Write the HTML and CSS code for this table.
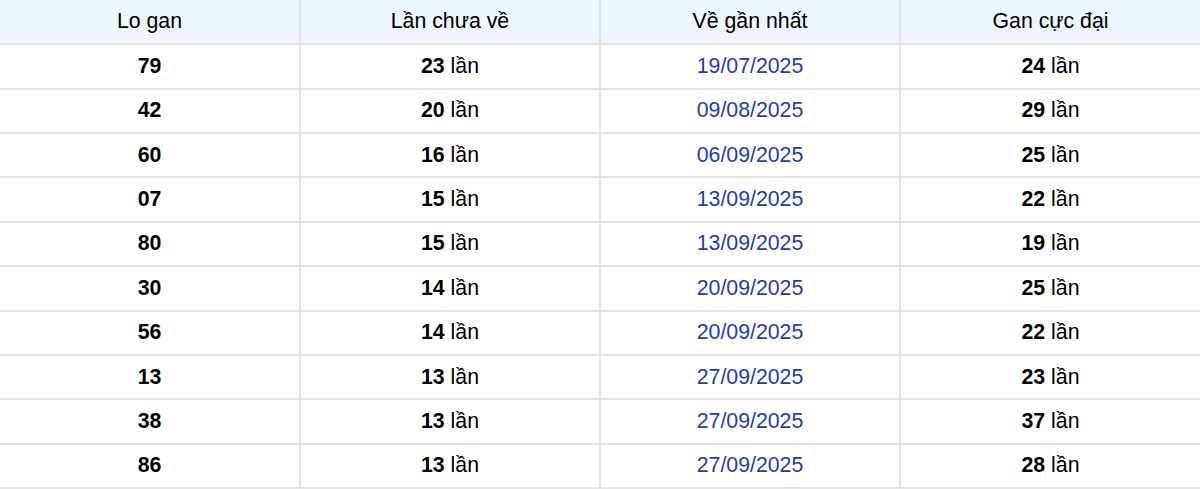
FILE: index.html
```html
<!DOCTYPE html>
<html lang="vi">
<head>
<meta charset="utf-8">
<title>Lo gan</title>
<link rel="stylesheet" href="styles.css">
</head>
<body>
<table class="gan-table">
  <thead>
    <tr><th>Lo gan</th><th>Lần chưa về</th><th>Về gần nhất</th><th>Gan cực đại</th></tr>
  </thead>
  <tbody>
    <tr><td><b>79</b></td><td><b>23</b> lần</td><td class="date">19/07/2025</td><td><b>24</b> lần</td></tr>
    <tr><td><b>42</b></td><td><b>20</b> lần</td><td class="date">09/08/2025</td><td><b>29</b> lần</td></tr>
    <tr><td><b>60</b></td><td><b>16</b> lần</td><td class="date">06/09/2025</td><td><b>25</b> lần</td></tr>
    <tr><td><b>07</b></td><td><b>15</b> lần</td><td class="date">13/09/2025</td><td><b>22</b> lần</td></tr>
    <tr><td><b>80</b></td><td><b>15</b> lần</td><td class="date">13/09/2025</td><td><b>19</b> lần</td></tr>
    <tr><td><b>30</b></td><td><b>14</b> lần</td><td class="date">20/09/2025</td><td><b>25</b> lần</td></tr>
    <tr><td><b>56</b></td><td><b>14</b> lần</td><td class="date">20/09/2025</td><td><b>22</b> lần</td></tr>
    <tr><td><b>13</b></td><td><b>13</b> lần</td><td class="date">27/09/2025</td><td><b>23</b> lần</td></tr>
    <tr><td><b>38</b></td><td><b>13</b> lần</td><td class="date">27/09/2025</td><td><b>37</b> lần</td></tr>
    <tr><td><b>86</b></td><td><b>13</b> lần</td><td class="date">27/09/2025</td><td><b>28</b> lần</td></tr>
  </tbody>
</table>
</body>
</html>
```
FILE: styles.css
```css
html, body {
  margin: 0;
  padding: 0;
  background: #ffffff;
}
body {
  font-family: "Liberation Sans", Arial, sans-serif;
  color: #000000;
}
.gan-table {
  width: 1200px;
  border-collapse: collapse;
  table-layout: fixed;
  font-size: 21.3px;
}
.gan-table th,
.gan-table td {
  height: 44.36px;
  padding: 0;
  text-align: center;
  vertical-align: middle;
  border-bottom: 2px solid #e4e4e4;
  border-left: 2px solid #e4e4e4;
  box-sizing: border-box;
}
.gan-table th:first-child,
.gan-table td:first-child {
  border-left: none;
}
.gan-table th {
  font-weight: normal;
  background: #eef6ff;
}
.gan-table b {
  font-weight: bold;
}
.gan-table td.date {
  color: #1d3bb6;
}
```
